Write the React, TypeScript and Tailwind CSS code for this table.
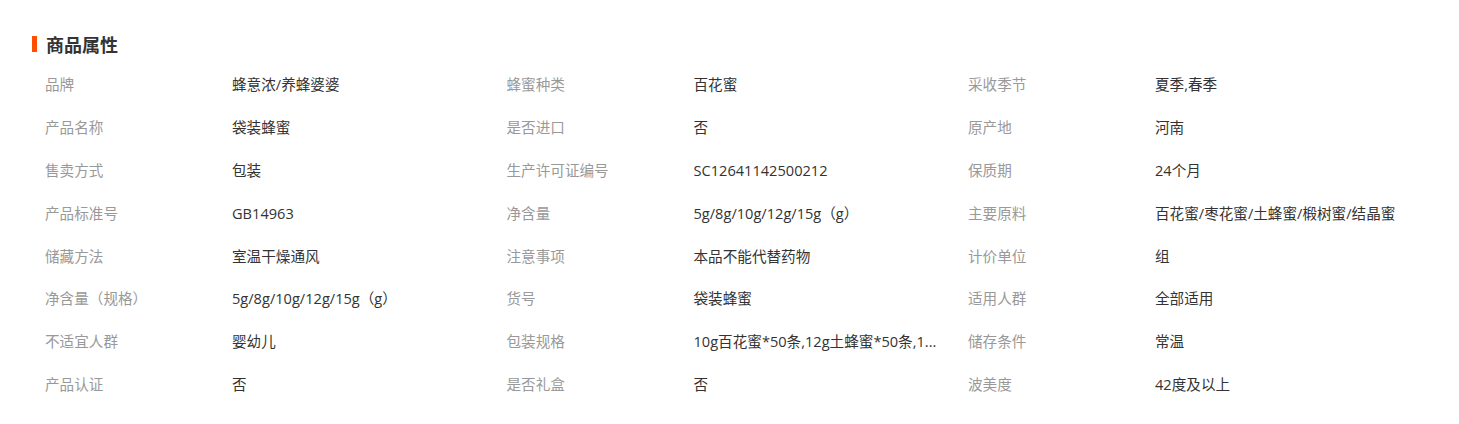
import React from "react";

const rows: [string, string][] = [
  ["品牌", "蜂意浓/养蜂婆婆"],
  ["蜂蜜种类", "百花蜜"],
  ["采收季节", "夏季,春季"],
  ["产品名称", "袋装蜂蜜"],
  ["是否进口", "否"],
  ["原产地", "河南"],
  ["售卖方式", "包装"],
  ["生产许可证编号", "SC12641142500212"],
  ["保质期", "24个月"],
  ["产品标准号", "GB14963"],
  ["净含量", "5g/8g/10g/12g/15g（g）"],
  ["主要原料", "百花蜜/枣花蜜/土蜂蜜/椴树蜜/结晶蜜"],
  ["储藏方法", "室温干燥通风"],
  ["注意事项", "本品不能代替药物"],
  ["计价单位", "组"],
  ["净含量（规格）", "5g/8g/10g/12g/15g（g）"],
  ["货号", "袋装蜂蜜"],
  ["适用人群", "全部适用"],
  ["不适宜人群", "婴幼儿"],
  ["包装规格", "10g百花蜜*50条,12g土蜂蜜*50条,1..."],
  ["储存条件", "常温"],
  ["产品认证", "否"],
  ["是否礼盒", "否"],
  ["波美度", "42度及以上"],
];

export default function App() {
  return (
    <div
      className="w-[1459px] h-[424px] bg-white pl-[32px] pt-[36px]"
      style={{ fontFamily: '"Open Sans", "Noto Sans CJK SC", sans-serif' }}
    >
      <div className="flex items-center h-[16px]">
        <div className="w-[5px] h-[16px] bg-[#ff5000]" />
        <div
          className="ml-[9px] text-[18px] font-bold text-[#333] leading-none"
          style={{ fontFamily: '"Noto Sans CJK SC", sans-serif' }}
        >
          商品属性
        </div>
      </div>
      <div className="mt-[12px] grid grid-cols-[461.5px_461.5px_461.5px] auto-rows-[42.8px]">
        {rows.map(([k, v], i) => (
          <div key={i} className="flex items-center text-[14.6px]">
            <div className="w-[200px] pl-[13px] text-[#999] whitespace-nowrap">{k}</div>
            <div className="w-[255px] text-[#333] whitespace-nowrap">{v}</div>
          </div>
        ))}
      </div>
    </div>
  );
}
